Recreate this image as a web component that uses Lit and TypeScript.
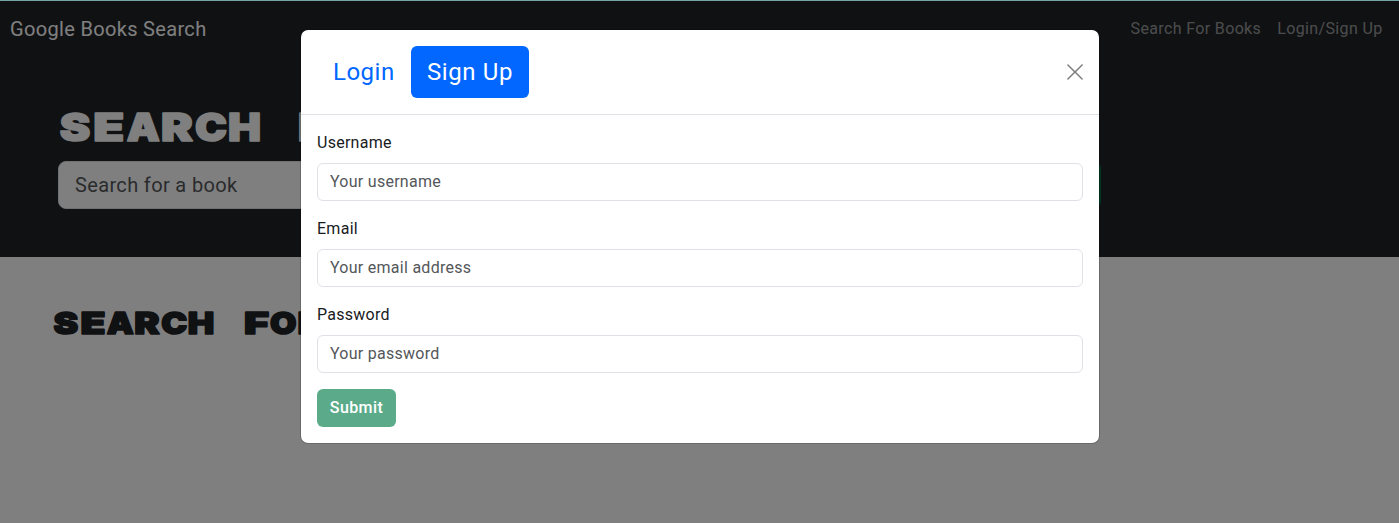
import { LitElement, html, svg, css } from "lit";
import { customElement, property } from "lit/decorators.js";

type Glyph = [string, number, number];

/** Blocky display heading: every letter fills its own cell. */
@customElement("block-heading")
class BlockHeading extends LitElement {
  @property({ attribute: false }) glyphs: Glyph[] = [];
  @property({ type: Number }) cap = 28;

  static styles = css`
    :host { display: block; }
    svg { display: block; overflow: visible; }
    text {
      font-family: Inter, "Liberation Sans", sans-serif;
      font-weight: 900;
      fill: currentColor;
      stroke: currentColor;
      stroke-linejoin: round;
    }
  `;

  render() {
    const size = (this.cap - 1.6) / 0.727;
    return html`<svg width="500" height=${this.cap} role="img">
      <text y=${this.cap - 0.8} font-size=${size} stroke-width="1.6">${this.glyphs.map(
        ([ch, x, w]) => svg`<tspan x=${x} textLength=${w} lengthAdjust="spacingAndGlyphs">${ch}</tspan>`
      )}</text>
    </svg>`;
  }
}

@customElement("text-field")
class TextField extends LitElement {
  @property() label = "";
  @property() hint = "";

  static styles = css`
    :host { display: block; margin-bottom: 16px; }
    label { display: block; height: 24px; line-height: 23px; margin-bottom: 8px; color: #181b1e; font-weight: 450; letter-spacing: 0.27px; }
    input {
      display: block; box-sizing: border-box; width: 100%; height: 38px;
      padding: 5px 12px 7px; border: 1px solid #dee2e6; border-radius: 6px;
      background: #fff; font: inherit; outline: none; letter-spacing: 0.27px;
    }
    input::placeholder { color: #54575a; opacity: 1; }
  `;

  render() {
    return html`<label>${this.label}</label><input placeholder=${this.hint} />`;
  }
}

@customElement("app-root")
class AppRoot extends LitElement {
  static styles = css`
    :host {
      display: block; position: relative; height: 523px; overflow: hidden;
      background: #fff; color: #1f2327;
      font: 400 16px/24px Roboto, "Liberation Sans", sans-serif;
    }
    .topline { height: 1px; background: #76a5a6; position: relative; z-index: 2; }
    nav { height: 56px; box-sizing: border-box; padding: 0 16.5px 0 10px; background: #1f2327; display: flex; justify-content: space-between; align-items: center; }
    .brand { color: #fff; font-size: 20px; letter-spacing: 0.33px; }
    .links { display: flex; gap: 16px; color: rgba(255, 255, 255, 0.55); letter-spacing: 0.36px; }
    .hero { height: 200px; box-sizing: border-box; padding: 56px 298px 0 58px; background: #1f2327; color: #fff; }
    .hero-row { display: flex; gap: 16px; margin-top: 19px; }
    .search { flex: 1; box-sizing: border-box; height: 48px; padding: 0 16px; border: 1px solid #dee2e6; border-radius: 8px; background: #fff; font: inherit; font-size: 20px; letter-spacing: 0.35px; }
    .search::placeholder { color: #54575a; opacity: 1; }
    .go { width: 340px; height: 48px; border: 0; border-radius: 8px; background: #006b40; color: #fff; font: inherit; font-size: 20px; }
    .results { padding: 53.5px 53px; }
    .overlay { position: absolute; inset: 0; z-index: 1; background: rgba(0, 0, 0, 0.5); display: flex; justify-content: center; align-items: flex-start; padding-top: 29px; padding-left: 1px; }
    .modal { width: 800px; box-sizing: border-box; background: #fff; background-clip: padding-box; border: 1px solid rgba(0, 0, 0, 0.175); border-radius: 8px; }
    .head { display: flex; justify-content: space-between; align-items: center; padding: 16px; border-bottom: 1px solid #dee2e6; }
    .tabs { display: flex; font-size: 24px; line-height: 36px; }
    .tab { box-sizing: border-box; height: 52px; padding: 8px 16px; border-radius: 6px; color: #0167ff; white-space: nowrap; }
    .login { width: 94px; letter-spacing: 0.5px; }
    .signup { width: 118px; background: #0167ff; color: #fff; font-weight: 450; letter-spacing: 0.6px; }
    .close { display: block; opacity: 0.5; }
    .body { padding: 16px; }
    .submit { display: block; width: 79px; height: 38px; padding: 0; border: 0; border-radius: 6px; background: #5bab8a; color: #fff; font: inherit; font-weight: 500; letter-spacing: 0.4px; }
  `;

  render() {
    const title: Glyph[] = [
      ["S", 1.8, 30.5], ["E", 35.3, 31], ["A", 68.7, 33], ["R", 103, 31.8], ["C", 137, 32], ["H", 170, 33], ["F", 239.7, 32],
    ];
    const results: Glyph[] = [
      ["S", 0.5, 24.7], ["E", 27.4, 25], ["A", 53.7, 27], ["R", 81.2, 25.3], ["C", 108.2, 26], ["H", 134.7, 26.5], ["F", 191, 25], ["O", 217, 26.5], ["R", 244.5, 26],
    ];
    return html`
      <div class="topline"></div>
      <nav>
        <span class="brand">Google Books Search</span>
        <div class="links"><span>Search For Books</span><span>Login/Sign Up</span></div>
      </nav>
      <section class="hero">
        <block-heading .glyphs=${title} .cap=${29}></block-heading>
        <div class="hero-row">
          <input class="search" placeholder="Search for a book" />
          <button class="go"></button>
        </div>
      </section>
      <section class="results"><block-heading .glyphs=${results} .cap=${23.5}></block-heading></section>
      <div class="overlay">
        <div class="modal">
          <div class="head">
            <div class="tabs"><span class="tab login">Login</span><span class="tab signup">Sign Up</span></div>
            <svg class="close" width="16" height="16" viewBox="0 0 16 16"><path d="M.4.4a.75.75 0 0 1 1.06 0L8 6.94 14.54.4a.75.75 0 1 1 1.06 1.06L9.06 8l6.54 6.54a.75.75 0 0 1-1.06 1.06L8 9.06 1.46 15.6A.75.75 0 0 1 .4 14.54L6.94 8 .4 1.46A.75.75 0 0 1 .4.4z" /></svg>
          </div>
          <div class="body">
            <text-field label="Username" hint="Your username"></text-field>
            <text-field label="Email" hint="Your email address"></text-field>
            <text-field label="Password" hint="Your password"></text-field>
            <button class="submit">Submit</button>
          </div>
        </div>
      </div>
    `;
  }
}
